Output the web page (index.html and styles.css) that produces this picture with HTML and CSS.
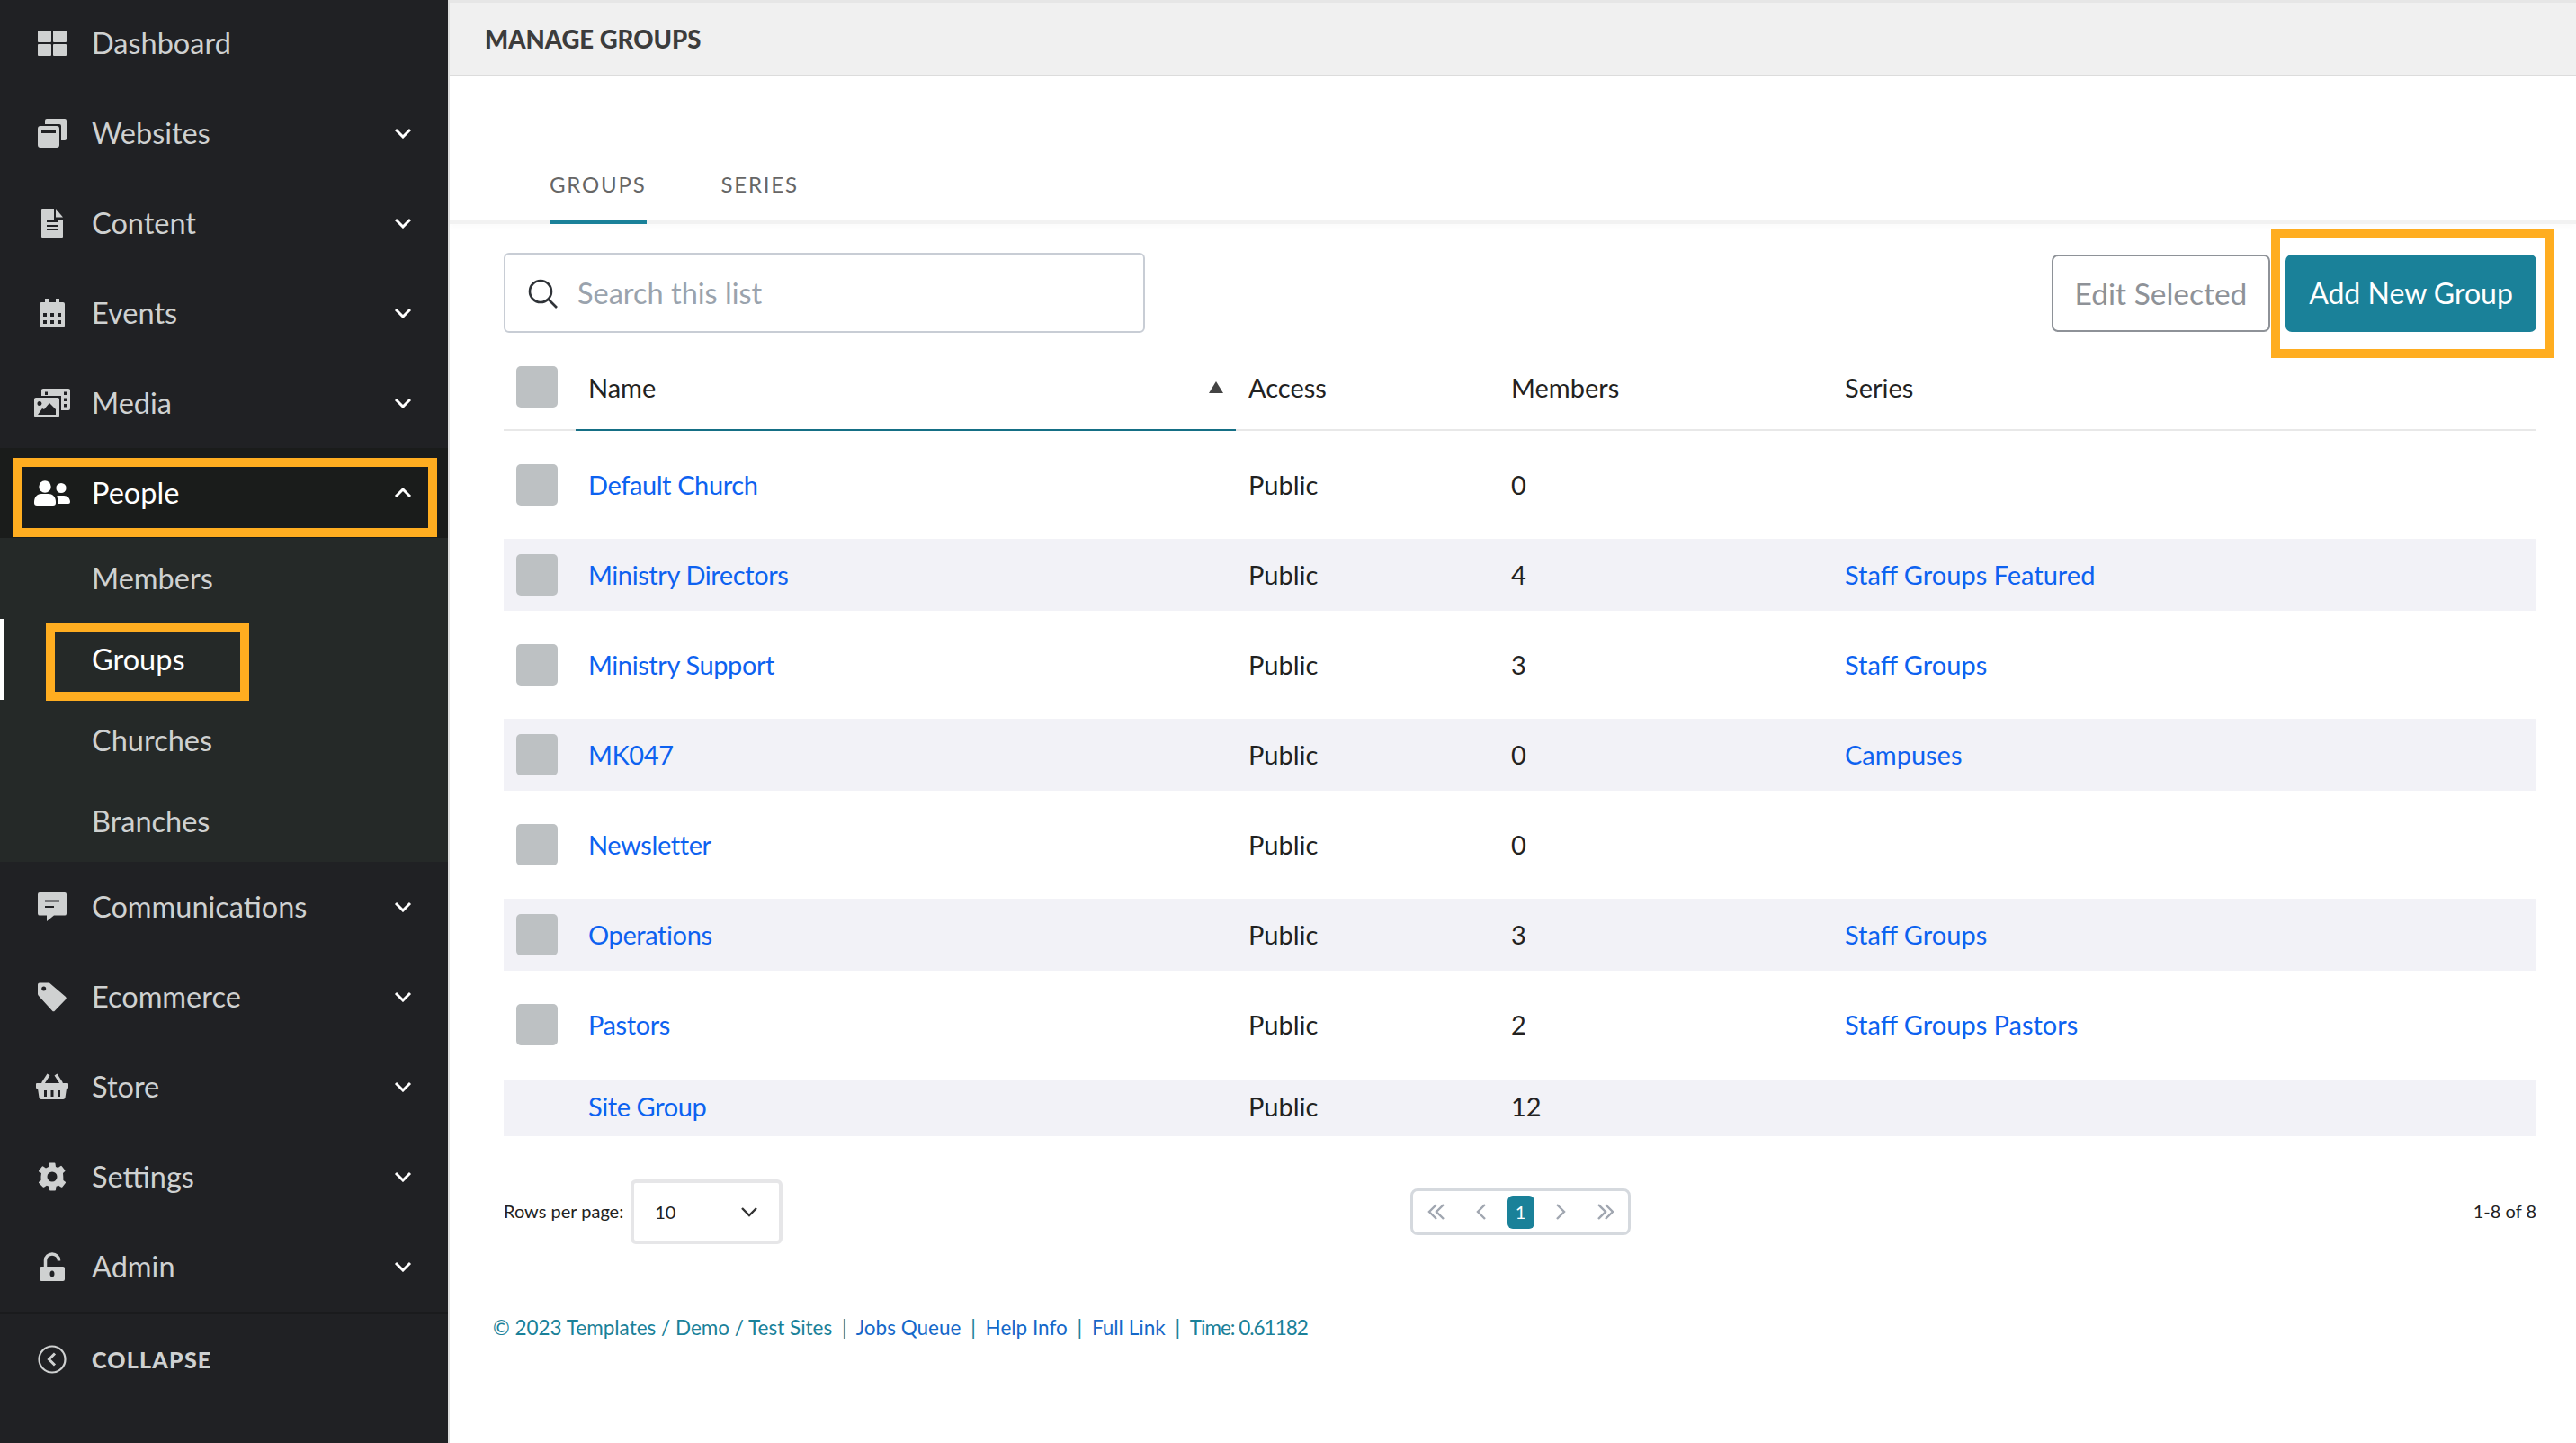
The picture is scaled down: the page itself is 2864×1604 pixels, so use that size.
FILE: index.html
```html
<!DOCTYPE html>
<html lang="en">
<head>
    <meta charset="UTF-8">
    <title>Manage Groups</title>
    <link rel="stylesheet" href="styles.css">
</head>
<body>
    <div class="app">
        <aside class="sidebar">
            <nav class="side-nav">
                <a class="side-item">
                    <svg class="side-icon" viewBox="0 0 40 40"><rect x="4" y="6" width="15" height="13" rx="1"/><rect x="21" y="6" width="15" height="13" rx="1"/><rect x="4" y="21" width="15" height="13" rx="1"/><rect x="21" y="21" width="15" height="13" rx="1"/></svg>
                    <span class="side-label">Dashboard</span>
                </a>
                <a class="side-item">
                    <svg class="side-icon" viewBox="0 0 40 40"><path d="M12 6a2 2 0 0 1 2-2h20a2 2 0 0 1 2 2v20a2 2 0 0 1-2 2h-4V12a2 2 0 0 0-2-2H12z"/><path fill-rule="evenodd" d="M7 12h18a3 3 0 0 1 3 3v18a3 3 0 0 1-3 3H7a3 3 0 0 1-3-3V15a3 3 0 0 1 3-3zM8 16v4h16v-4z"/></svg>
                    <span class="side-label">Websites</span>
                    <svg class="side-caret" viewBox="0 0 20 12"><path d="M2 2l8 8 8-8"/></svg>
                </a>
                <a class="side-item">
                    <svg class="side-icon" viewBox="0 0 40 40"><path fill-rule="evenodd" d="M9 4h13v12h10v19a1 1 0 0 1-1 1H9a1 1 0 0 1-1-1V5a1 1 0 0 1 1-1zM14 17v2h12v-2zM14 22v2h12v-2zM14 26v2h12v-2z"/><path d="M24 4l8 9.500h-8z"/></svg>
                    <span class="side-label">Content</span>
                    <svg class="side-caret" viewBox="0 0 20 12"><path d="M2 2l8 8 8-8"/></svg>
                </a>
                <a class="side-item">
                    <svg class="side-icon" viewBox="0 0 40 40"><path fill-rule="evenodd" d="M12 4h4v4h8V4h4v4h4a2 2 0 0 1 2 2v24a2 2 0 0 1-2 2H8a2 2 0 0 1-2-2V10a2 2 0 0 1 2-2h4zM10 20v4h4v-4zM18 20v4h4v-4zM26 20v4h4v-4zM10 28v4h4v-4zM18 28v4h4v-4zM26 28v4h4v-4z"/></svg>
                    <span class="side-label">Events</span>
                    <svg class="side-caret" viewBox="0 0 20 12"><path d="M2 2l8 8 8-8"/></svg>
                </a>
                <a class="side-item">
                    <svg class="side-icon" viewBox="0 0 40 40"><path fill-rule="evenodd" d="M10 4h28a2 2 0 0 1 2 2v20a2 2 0 0 1-2 2h-8V12H8V6a2 2 0 0 1 2-2zM12 7.500v3.500h3V7.500zM33 7.500v3.500h3V7.500zM33 14.500v3.500h3v-3.500zM33 21v3.500h3V21z"/><path fill-rule="evenodd" d="M2 14h24a2 2 0 0 1 2 2v18a2 2 0 0 1-2 2H2a2 2 0 0 1-2-2V16a2 2 0 0 1 2-2zM6 18a2.500 2.500 0 1 0 0 5 2.500 2.500 0 0 0 0-5zM4 33h20v-6l-7-7-6 7-2-1z"/></svg>
                    <span class="side-label">Media</span>
                    <svg class="side-caret" viewBox="0 0 20 12"><path d="M2 2l8 8 8-8"/></svg>
                </a>
                <a class="side-item is-open">
                    <svg class="side-icon" viewBox="0 0 40 40"><circle cx="12" cy="13" r="6.700"/><path d="M0 30c0-6 4-9 8-9h8c4 0 8 3 8 9v1a3 3 0 0 1-3 3H3a3 3 0 0 1-3-3z"/><circle cx="30" cy="14.500" r="5.600"/><path d="M26 23h7c4 0 7 3 7 7a2 2 0 0 1-2 2H27c0-3-0.500-6-2-8z"/></svg>
                    <span class="side-label">People</span>
                    <svg class="side-caret" viewBox="0 0 20 12"><path d="M2 10l8-8 8 8"/></svg>
                </a>
                <div class="side-sub">
                    <a class="sub-item">Members</a>
                    <a class="sub-item is-active">Groups</a>
                    <a class="sub-item">Churches</a>
                    <a class="sub-item">Branches</a>
                </div>
                <a class="side-item">
                    <svg class="side-icon" viewBox="0 0 40 40"><path fill-rule="evenodd" d="M6 4h28a2 2 0 0 1 2 2v21.500a2 2 0 0 1-2 2H22L14 36v-6.500H6a2 2 0 0 1-2-2V6a2 2 0 0 1 2-2zM12 12.500v2h16v-2zM12 19v2h10v-2z"/></svg>
                    <span class="side-label">Communications</span>
                    <svg class="side-caret" viewBox="0 0 20 12"><path d="M2 2l8 8 8-8"/></svg>
                </a>
                <a class="side-item">
                    <svg class="side-icon" viewBox="0 0 40 40"><path fill-rule="evenodd" d="M6 4.500h10a3 3 0 0 1 2 1l17 14.500a2 2 0 0 1 0 3L23 35.500a2 2 0 0 1-3 0L5 19a3 3 0 0 1-1-2V6.500a2 2 0 0 1 2-2zM10.700 8.500a2.500 2.500 0 1 0 0 5 2.500 2.500 0 0 0 0-5z"/></svg>
                    <span class="side-label">Ecommerce</span>
                    <svg class="side-caret" viewBox="0 0 20 12"><path d="M2 2l8 8 8-8"/></svg>
                </a>
                <a class="side-item">
                    <svg class="side-icon" viewBox="0 0 40 40"><path fill-rule="evenodd" d="M3 16h34a1 1 0 0 1 1 1v4a1 1 0 0 1-1 1h-1l-1.500 10a2.500 2.500 0 0 1-2.500 2H8a2.500 2.500 0 0 1-2.500-2L4 22H3a1 1 0 0 1-1-1v-4a1 1 0 0 1 1-1zM11 24v7h3v-7zM18.500 24v7h3v-7zM26 24v7h3v-7z"/><path class="side-line" d="M9.500 16.500L16 6.500M30.500 16.500L24 6.500"/></svg>
                    <span class="side-label">Store</span>
                    <svg class="side-caret" viewBox="0 0 20 12"><path d="M2 2l8 8 8-8"/></svg>
                </a>
                <a class="side-item">
                    <svg class="side-icon" viewBox="0 0 40 40"><path fill-rule="evenodd" d="M17.500 4.500h5a1 1 0 0 1 1 1l.5 3.500 2.500 1 3-2a1 1 0 0 1 1.200.200l3.500 4.500a1 1 0 0 1 0 1.300L32 16l.3 4 .1 4 2.400 1.700a1 1 0 0 1 0 1.300l-3.500 4.500a1 1 0 0 1-1.200.200l-3-2-2.600 1-.5 3.800a1 1 0 0 1-1 1h-5a1 1 0 0 1-1-1l-.5-3.800-2.600-1-3 2a1 1 0 0 1-1.200-.200L5.200 27a1 1 0 0 1 0-1.300L7.600 24l-.1-4 .5-4-2.800-1.500a1 1 0 0 1 0-1.300l3.500-4.500A1 1 0 0 1 10 8.500l3 2 3-1.500.5-3.500a1 1 0 0 1 1-1zM20 14.500a5.500 5.500 0 1 0 0 11 5.500 5.500 0 0 0 0-11z"/></svg>
                    <span class="side-label">Settings</span>
                    <svg class="side-caret" viewBox="0 0 20 12"><path d="M2 2l8 8 8-8"/></svg>
                </a>
                <a class="side-item">
                    <svg class="side-icon" viewBox="0 0 40 40"><path class="side-line" d="M12.500 21v-8a7.500 7 0 0 1 15 0v.500"/><path fill-rule="evenodd" d="M8 20h24a2 2 0 0 1 2 2v12a2 2 0 0 1-2 2H8a2 2 0 0 1-2-2V22a2 2 0 0 1 2-2zM20 24.500c-1.500 0-2.500 1.500-2.500 3.500s1 3.500 2.500 3.500 2.500-1.500 2.500-3.500-1-3.500-2.500-3.500z"/></svg>
                    <span class="side-label">Admin</span>
                    <svg class="side-caret" viewBox="0 0 20 12"><path d="M2 2l8 8 8-8"/></svg>
                </a>
            </nav>
            <a class="side-collapse">
                <svg class="side-icon collapse-icon" viewBox="0 0 40 40"><circle cx="20" cy="20" r="14.500"/><path d="M23 13.500L16.500 20l6.500 6.500"/></svg>
                <span class="collapse-label">COLLAPSE</span>
            </a>
        </aside>

        <main class="main">
            <header class="page-head">
                <h1>MANAGE GROUPS</h1>
            </header>

            <div class="tabs">
                <a class="tab is-active">GROUPS</a>
                <a class="tab">SERIES</a>
            </div>

            <section class="content">
                <div class="toolbar">
                    <label class="search">
                        <svg class="search-icon" viewBox="0 0 34 34"><circle cx="15" cy="15" r="12"/><path d="M24 24l9 9"/></svg>
                        <input type="text" placeholder="Search this list">
                    </label>
                    <div class="toolbar-actions">
                        <button class="btn btn-outline">Edit Selected</button>
                        <button class="btn btn-primary">Add New Group</button>
                    </div>
                </div>

                <div class="list">
                    <div class="list-head">
                        <div class="cell-check"><span class="check"></span></div>
                        <div class="cell-name head-name">
                            <span>Name</span>
                            <svg class="sort-icon" viewBox="0 0 16 13"><path d="M8 0l8 13H0z"/></svg>
                        </div>
                        <div>Access</div>
                        <div>Members</div>
                        <div>Series</div>
                    </div>

                    <div class="list-row">
                        <div class="cell-check"><span class="check"></span></div>
                        <div class="cell-name"><a>Default Church</a></div>
                        <div>Public</div>
                        <div>0</div>
                        <div></div>
                    </div>
                    <div class="list-row is-striped">
                        <div class="cell-check"><span class="check"></span></div>
                        <div class="cell-name"><a>Ministry Directors</a></div>
                        <div>Public</div>
                        <div>4</div>
                        <div><a>Staff Groups Featured</a></div>
                    </div>
                    <div class="list-row">
                        <div class="cell-check"><span class="check"></span></div>
                        <div class="cell-name"><a>Ministry Support</a></div>
                        <div>Public</div>
                        <div>3</div>
                        <div><a>Staff Groups</a></div>
                    </div>
                    <div class="list-row is-striped">
                        <div class="cell-check"><span class="check"></span></div>
                        <div class="cell-name"><a>MK047</a></div>
                        <div>Public</div>
                        <div>0</div>
                        <div><a>Campuses</a></div>
                    </div>
                    <div class="list-row">
                        <div class="cell-check"><span class="check"></span></div>
                        <div class="cell-name"><a>Newsletter</a></div>
                        <div>Public</div>
                        <div>0</div>
                        <div></div>
                    </div>
                    <div class="list-row is-striped">
                        <div class="cell-check"><span class="check"></span></div>
                        <div class="cell-name"><a>Operations</a></div>
                        <div>Public</div>
                        <div>3</div>
                        <div><a>Staff Groups</a></div>
                    </div>
                    <div class="list-row">
                        <div class="cell-check"><span class="check"></span></div>
                        <div class="cell-name"><a>Pastors</a></div>
                        <div>Public</div>
                        <div>2</div>
                        <div><a>Staff Groups Pastors</a></div>
                    </div>
                    <div class="list-row is-striped is-short">
                        <div class="cell-check"></div>
                        <div class="cell-name"><a>Site Group</a></div>
                        <div>Public</div>
                        <div>12</div>
                        <div></div>
                    </div>
                </div>

                <div class="list-foot">
                    <div class="rows-per-page">
                        <span class="rows-label">Rows per page:</span>
                        <div class="rows-select">
                            <span>10</span>
                            <svg viewBox="0 0 20 12"><path d="M2 2l8 8 8-8"/></svg>
                        </div>
                    </div>
                    <div class="pager">
                        <svg class="pg-btn pg-first" viewBox="0 0 30 20"><path d="M15 2l-8 8 8 8M23 2l-8 8 8 8"/></svg>
                        <svg class="pg-btn" viewBox="0 0 30 20"><path d="M19 2l-8 8 8 8"/></svg>
                        <span class="pg-current">1</span>
                        <svg class="pg-btn" viewBox="0 0 30 20"><path d="M11 2l8 8-8 8"/></svg>
                        <svg class="pg-btn pg-last" viewBox="0 0 30 20"><path d="M7 2l8 8-8 8M15 2l8 8-8 8"/></svg>
                    </div>
                    <div class="range">1-8 of 8</div>
                </div>

                <footer class="page-foot">
                    © 2023 Templates / Demo / Test Sites <i>|</i> <a>Jobs Queue</a> <i>|</i> <a>Help Info</a> <i>|</i> <a>Full Link</a> <i>|</i> <span class="foot-time">Time: 0.61182</span>
                </footer>
            </section>
        </main>

        <!-- callouts drawn on top of the screenshot -->
        <div class="callout callout-people"></div>
        <div class="callout callout-groups"></div>
        <div class="callout callout-add"></div>
    </div>
</body>
</html>
```

FILE: styles.css
```css
/* Base */
* {
    box-sizing: border-box;
}

html, body {
    margin: 0;
    height: 100%;
    overflow: hidden;
}

body {
    font-family: Lato, "Noto Sans", sans-serif;
    font-size: 29px;
    color: #222;
    background-color: #fff;
}

.app {
    position: relative;
    display: flex;
    height: 1604px;
}

/* Sidebar */
.sidebar {
    width: 500px;
    flex-shrink: 0;
    background-color: #202124;
    border-right: 2px solid #dfdfdf;
    color: #cfd1d1;
    overflow: hidden;
}

.side-nav {
    margin-top: -2px;
    border-bottom: 3px solid #1a1b1d;
}

.side-item {
    display: flex;
    align-items: center;
    height: 100px;
    padding: 0 40px 0 38px;
    font-size: 32.500px;
}

.side-icon {
    width: 40px;
    height: 40px;
    margin-right: 24px;
    flex-shrink: 0;
    fill: #cfd1d1;
}

.side-line {
    fill: none;
    stroke: #cfd1d1;
    stroke-width: 3.5;
}

.side-label {
    flex: 1;
    padding-bottom: 2px;
}

.side-caret {
    width: 20px;
    height: 12px;
    fill: none;
    stroke: #fff;
    stroke-width: 3;
}

.side-item.is-open {
    background-color: #1a1c1b;
    color: #fff;
}

.side-item.is-open .side-icon {
    fill: #fff;
}

.side-sub {
    background-color: #252928;
}

.sub-item {
    display: flex;
    align-items: center;
    height: 90px;
    padding: 0 0 2px 102px;
    font-size: 32.500px;
}

.sub-item.is-active {
    color: #fff;
    box-shadow: inset 4px 0 0 #fff;
}

.side-collapse {
    display: flex;
    align-items: center;
    height: 100px;
    padding-left: 38px;
}

.collapse-icon {
    fill: none;
    stroke: #cfd1d1;
    stroke-width: 2.2;
}

.collapse-icon path {
    stroke-width: 3;
}

.collapse-label {
    font-size: 25px;
    font-weight: 900;
    letter-spacing: 1.2px;
}

/* Main */
.main {
    flex: 1;
    min-width: 0;
}

.page-head {
    display: flex;
    align-items: center;
    height: 85px;
    padding: 1px 0 0 39px;
    background-color: #f0f0f0;
    border-top: 3px solid #e6e6e6;
    border-bottom: 2px solid #dcdcdc;
}

.page-head h1 {
    margin: 0;
    font-size: 27.500px;
    font-weight: 900;
    color: #3c3c3c;
}

.tabs {
    display: flex;
    align-items: flex-end;
    gap: 83px;
    height: 164px;
    padding-left: 111px;
    border-bottom: 4px solid #f2f2f2;
    box-shadow: 0 3px 6px rgba(0, 0, 0, 0.02);
}

.tab {
    margin-bottom: -4px;
    padding-bottom: 25px;
    border-bottom: 4px solid transparent;
    font-size: 24px;
    line-height: 30px;
    letter-spacing: 1.8px;
    color: #666;
}

.tab.is-active {
    border-bottom-color: #1a8199;
}

.content {
    padding: 32px 44px 0 60px;
}

.toolbar {
    display: flex;
    align-items: center;
    justify-content: space-between;
}

.search {
    display: flex;
    align-items: center;
    gap: 22px;
    width: 713px;
    height: 89px;
    padding-left: 24px;
    border: 2px solid #c8cdd5;
    border-radius: 6px;
}

.search-icon {
    width: 34px;
    height: 34px;
    flex-shrink: 0;
    fill: none;
    stroke: #2f3338;
    stroke-width: 2.6;
}

.search input {
    flex: 1;
    min-width: 0;
    border: none;
    outline: none;
    padding: 0;
    font-family: inherit;
    font-size: 32.500px;
}

.search input::placeholder {
    color: #9aa3ad;
    opacity: 1;
}

.toolbar-actions {
    display: flex;
    align-items: center;
    gap: 17px;
}

.btn {
    height: 86px;
    border-radius: 7px;
    font-family: inherit;
}

.btn-outline {
    width: 243px;
    background-color: #fff;
    border: 2px solid #8e9298;
    color: #8e9298;
    font-size: 33.500px;
}

.btn-primary {
    width: 279px;
    background-color: #1a8199;
    border: none;
    color: #fff;
    font-size: 32px;
}

/* Table */
.list-head,
.list-row {
    display: grid;
    grid-template-columns: 80px 748px 292px 371px 1fr;
    align-items: center;
}

.list-head {
    align-items: stretch;
    height: 96px;
    margin-top: 13px;
    border-bottom: 2px solid #e8e8e8;
}

.list-head > div {
    display: flex;
    align-items: center;
}

.list-row {
    height: 80px;
    margin-top: 20px;
}

.list-row > div:not(.cell-check) {
    padding-bottom: 2px;
}

.list-row a {
    color: #0d62f0;
}

.list-row .cell-name a {
    letter-spacing: -0.4px;
}

.list-row.is-striped {
    background-color: #f2f2f7;
}

.list-row.is-short {
    height: 63px;
    margin-top: 21px;
    padding-bottom: 2px;
}

.cell-check {
    padding-left: 14px;
}

.check {
    display: block;
    width: 46px;
    height: 46px;
    background-color: #bdc1c3;
    border-radius: 5px;
}

.cell-name {
    padding-left: 14px;
}

.head-name {
    justify-content: space-between;
    margin: 0 14px -2px 0;
    padding-right: 14px;
    border-bottom: 2px solid #156f85;
}

.sort-icon {
    width: 16px;
    height: 13px;
    fill: #444;
}

/* Footer row */
.list-foot {
    display: grid;
    grid-template-columns: 1fr auto 1fr;
    align-items: center;
    height: 72px;
    margin-top: 48px;
    font-size: 20px;
}

.rows-per-page {
    display: flex;
    align-items: center;
    gap: 8px;
}

.rows-label {
    padding-bottom: 3px;
}

.rows-select {
    display: flex;
    align-items: center;
    justify-content: space-between;
    width: 169px;
    height: 72px;
    padding: 0 23px;
    border: 4px solid #e6e6e8;
    border-radius: 6px;
}

.rows-select svg {
    width: 20px;
    height: 12px;
    fill: none;
    stroke: #333;
    stroke-width: 2.4;
}

.pager {
    display: flex;
    align-items: center;
    gap: 14px;
    width: 245px;
    height: 52px;
    padding-left: 11px;
    border: 3px solid #d5d9de;
    border-radius: 8px;
}

.pg-btn {
    width: 30px;
    height: 20px;
    fill: none;
    stroke: #a0a6b0;
    stroke-width: 2.4;
}

.pg-first {
    margin-right: 6px;
}

.pg-last {
    margin-left: 6px;
}

.pg-current {
    width: 30px;
    height: 37px;
    background-color: #1a8199;
    border-radius: 6px;
    color: #fff;
    text-align: center;
    line-height: 37px;
}

.range {
    justify-self: end;
    padding-bottom: 2px;
}

.page-foot {
    margin: 78px 0 0 -12px;
    font-size: 22.500px;
    line-height: 30px;
    color: #1a8199;
}

.page-foot a {
    color: #1568c9;
}

.page-foot i {
    margin: 0 5px;
    font-style: normal;
}

.foot-time {
    letter-spacing: -1px;
}

/* Orange callouts */
.callout {
    position: absolute;
    border: 10px solid #ffad20;
}

.callout-people {
    left: 15px;
    top: 509px;
    width: 471px;
    height: 88px;
}

.callout-groups {
    left: 51px;
    top: 692px;
    width: 226px;
    height: 87px;
}

.callout-add {
    left: 2525px;
    top: 255px;
    width: 315px;
    height: 143px;
}
```
